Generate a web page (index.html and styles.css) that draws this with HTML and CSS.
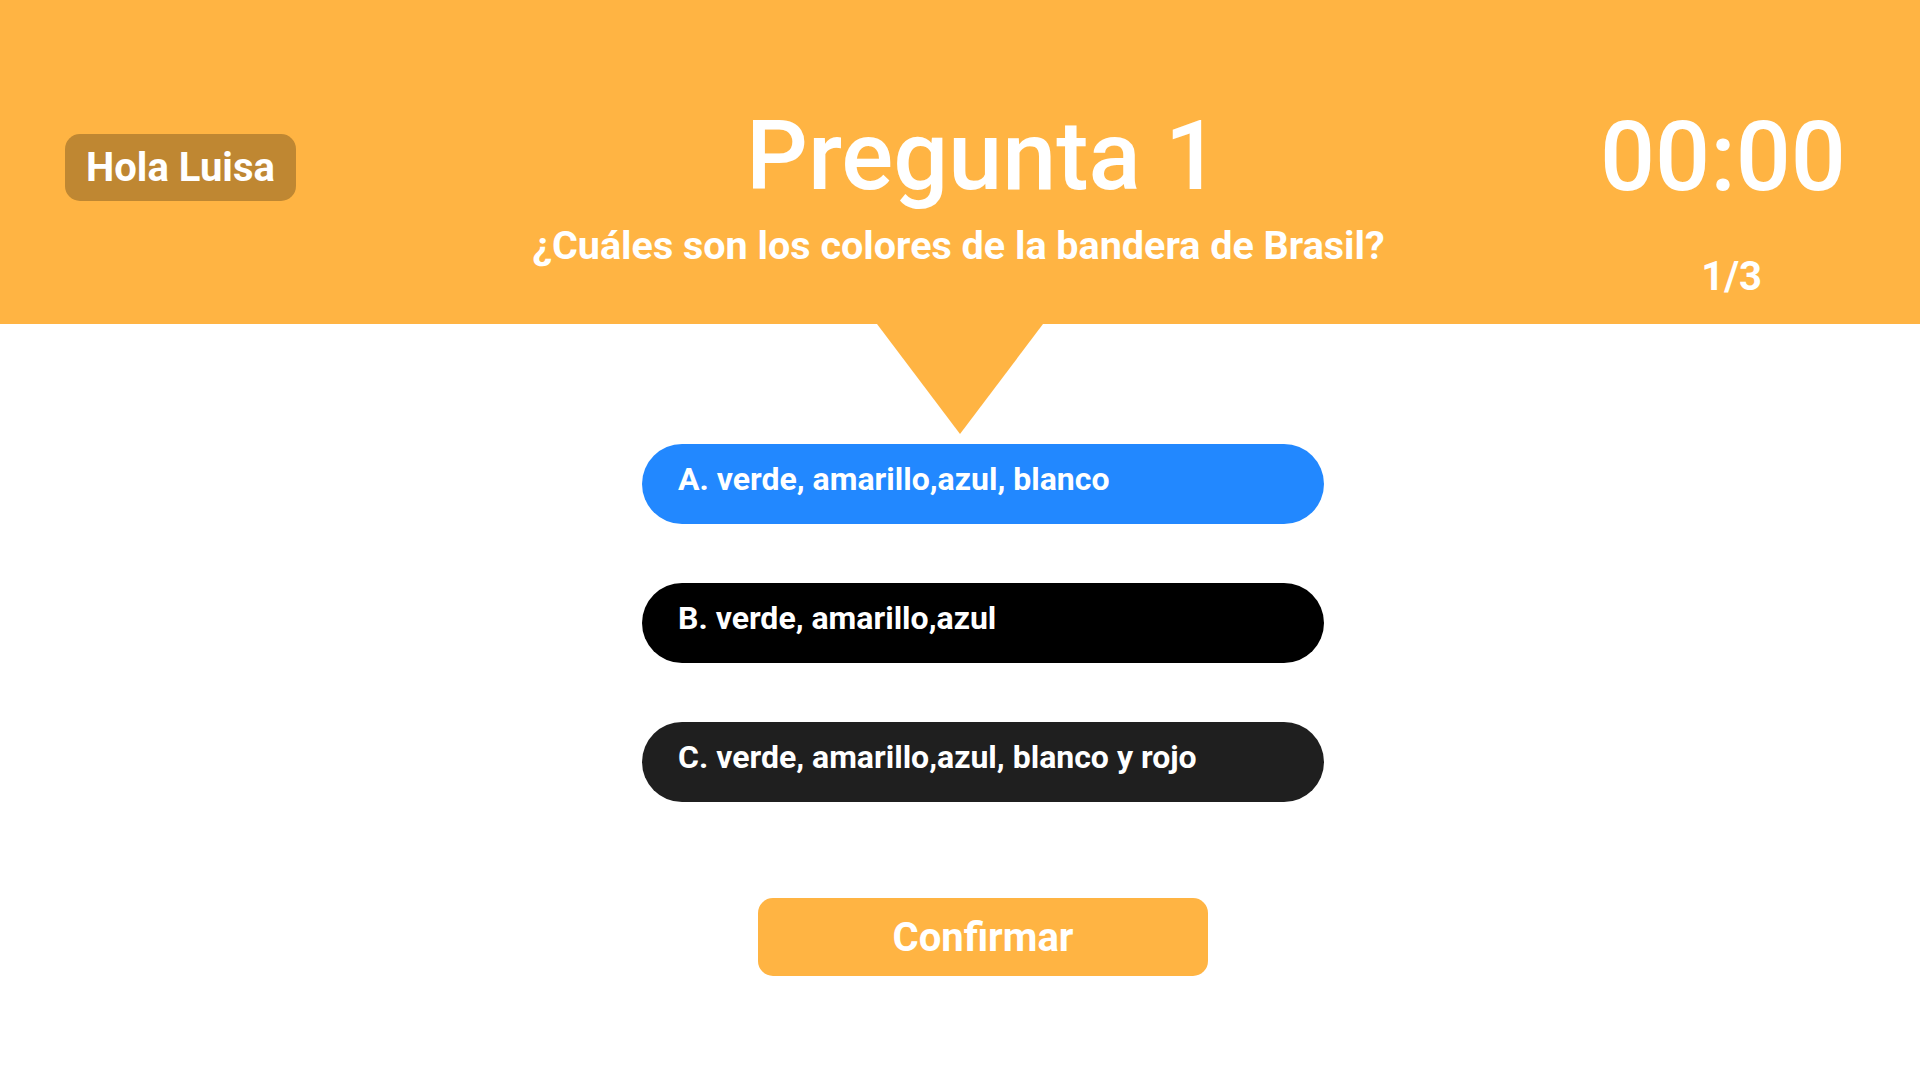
FILE: index.html
```html
<!DOCTYPE html>
<html lang="es">
<head>
<meta charset="utf-8">
<title>Pregunta 1</title>
<link rel="stylesheet" href="styles.css">
</head>
<body>
<header class="quiz-header">
  <div class="header-left">
    <span class="greeting">Hola Luisa</span>
  </div>
  <div class="header-center">
    <h1 class="question-title">Pregunta 1</h1>
    <p class="question-text">¿Cuáles son los colores de la bandera de Brasil?</p>
  </div>
  <div class="header-right">
    <div class="timer">00:00</div>
    <div class="counter">1/3</div>
  </div>
</header>
<div class="pointer"></div>
<main class="answers">
  <ul class="options">
    <li class="option option-selected">A. verde, amarillo,azul, blanco</li>
    <li class="option option-black">B. verde, amarillo,azul</li>
    <li class="option option-dark">C. verde, amarillo,azul, blanco y rojo</li>
  </ul>
  <button class="confirm" type="button">Confirmar</button>
</main>
</body>
</html>
```
FILE: styles.css
```css
* { box-sizing: border-box; }

html, body {
  margin: 0;
  padding: 0;
  background: #ffffff;
  font-family: Roboto, "Liberation Sans", sans-serif;
  color: #ffffff;
}

.quiz-header {
  height: 324px;
  background: #ffb443;
  display: grid;
  grid-template-columns: 1fr auto 1fr;
  align-items: start;
  padding: 108px 74px 0 65px;
}

.header-left {
  display: flex;
  justify-content: flex-start;
}

.greeting {
  display: inline-block;
  margin-top: 26px;
  height: 67px;
  line-height: 67px;
  padding: 0 21px;
  border-radius: 15px;
  background: #bf8732;
  font-size: 40px;
  font-weight: 700;
}

.header-center {
  display: flex;
  flex-direction: column;
  align-items: center;
}

.question-title {
  margin: 0;
  padding-left: 55px;
  font-size: 97px;
  line-height: 96px;
  font-weight: 500;
}

.question-text {
  margin: 22px 0 0;
  padding-left: 6px;
  font-size: 39.5px;
  line-height: 40px;
  font-weight: 700;
}

.header-right {
  display: flex;
  flex-direction: column;
  align-items: flex-end;
}

.timer {
  margin-top: 1px;
  font-size: 97px;
  line-height: 96px;
  font-weight: 500;
}

.counter {
  margin-top: 52px;
  margin-right: 84px;
  font-size: 40px;
  line-height: 40px;
  font-weight: 700;
}

.pointer {
  width: 0;
  height: 0;
  margin: 0 auto;
  border-left: 83px solid transparent;
  border-right: 83px solid transparent;
  border-top: 110px solid #ffb443;
}

.answers {
  display: flex;
  flex-direction: column;
  align-items: center;
  padding-left: 46px;
  padding-top: 10px;
}

.options {
  list-style: none;
  margin: 0;
  padding: 0;
  display: flex;
  flex-direction: column;
  gap: 59px;
}

.option {
  width: 682px;
  height: 80px;
  border-radius: 40px;
  padding: 0 36px 10px;
  display: flex;
  align-items: center;
  font-size: 32px;
  font-weight: 700;
  color: #ffffff;
}

.option-selected { background: #2288ff; }
.option-black { background: #000000; }
.option-dark { background: #1f1f1f; }

.confirm {
  margin-top: 96px;
  width: 450px;
  height: 78px;
  border: none;
  border-radius: 15px;
  background: #ffb443;
  color: #ffffff;
  font-family: Roboto, "Liberation Sans", sans-serif;
  font-size: 40px;
  font-weight: 700;
  cursor: pointer;
}
```
